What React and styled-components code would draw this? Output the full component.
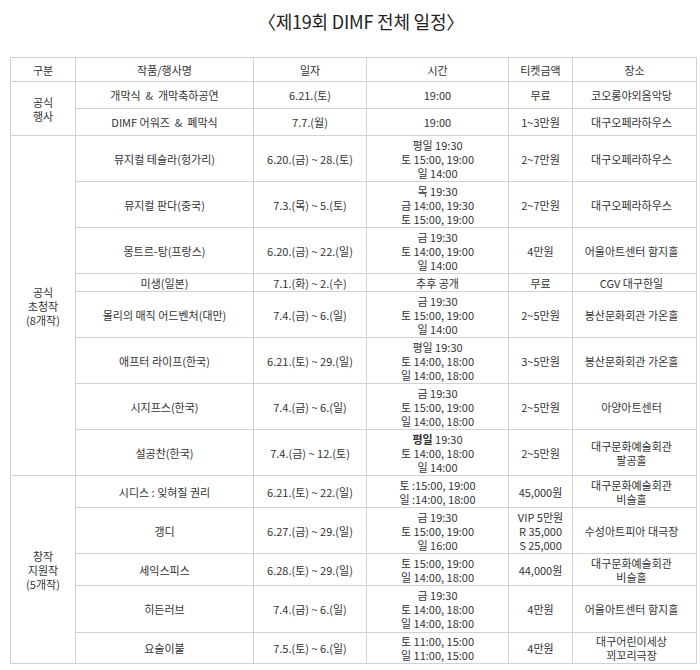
import styled, { createGlobalStyle } from 'styled-components';

const GlobalStyle = createGlobalStyle`
  body {
    margin: 0;
    background: #ffffff;
    font-family: "Noto Sans CJK KR", "Noto Sans", sans-serif;
    color: #333333;
  }
`;

// rows of the schedule, grouped by 구분
const groups = [
  {
    label: ['공식', '행사'],
    rows: [
      { h: 27, name: '개막식  &  개막축하공연', date: '6.21.(토)', time: ['19:00'], price: ['무료'], place: ['코오롱야외음악당'] },
      { h: 27, name: 'DIMF 어워즈  &  폐막식', date: '7.7.(월)', time: ['19:00'], price: ['1~3만원'], place: ['대구오페라하우스'] },
    ],
  },
  {
    label: ['공식', '초청작', '(8개작)'],
    rows: [
      { h: 46, name: '뮤지컬 테슬라(헝가리)', date: '6.20.(금) ~ 28.(토)', time: ['평일 19:30', '토 15:00, 19:00', '일 14:00'], price: ['2~7만원'], place: ['대구오페라하우스'] },
      { h: 46, name: '뮤지컬 판다(중국)', date: '7.3.(목) ~ 5.(토)', time: ['목 19:30', '금 14:00, 19:30', '토 15:00, 19:00'], price: ['2~7만원'], place: ['대구오페라하우스'] },
      { h: 46, name: '몽트르-탕(프랑스)', date: '6.20.(금) ~ 22.(일)', time: ['금 19:30', '토 14:00, 19:00', '일 14:00'], price: ['4만원'], place: ['어울아트센터 함지홀'] },
      { h: 18, name: '미생(일본)', date: '7.1.(화) ~ 2.(수)', time: ['추후 공개'], price: ['무료'], place: ['CGV 대구한일'] },
      { h: 46, name: '몰리의 매직 어드벤처(대만)', date: '7.4.(금) ~ 6.(일)', time: ['금 19:30', '토 15:00, 19:00', '일 14:00'], price: ['2~5만원'], place: ['봉산문화회관 가온홀'] },
      { h: 46, name: '애프터 라이프(한국)', date: '6.21.(토) ~ 29.(일)', time: ['평일 19:30', '토 14:00, 18:00', '일 14:00, 18:00'], price: ['3~5만원'], place: ['봉산문화회관 가온홀'] },
      { h: 46, name: '시지프스(한국)', date: '7.4.(금) ~ 6.(일)', time: ['금 19:30', '토 15:00, 19:00', '일 14:00, 18:00'], price: ['2~5만원'], place: ['아양아트센터'] },
      { h: 46, name: '설공찬(한국)', date: '7.4.(금) ~ 12.(토)', time: ['**평일** 19:30', '토 14:00, 18:00', '일 14:00'], price: ['2~5만원'], place: ['대구문화예술회관', '팔공홀'] },
    ],
  },
  {
    label: ['창작', '지원작', '(5개작)'],
    rows: [
      { h: 32, name: '시디스 : 잊혀질 권리', date: '6.21.(토) ~ 22.(일)', time: ['토 :15:00, 19:00', '일 :14:00, 18:00'], price: ['45,000원'], place: ['대구문화예술회관', '비슬홀'] },
      { h: 46, name: '갱디', date: '6.27.(금) ~ 29.(일)', time: ['금 19:30', '토 15:00, 19:00', '일 16:00'], price: ['VIP 5만원', 'R 35,000', 'S 25,000'], place: ['수성아트피아 대극장'] },
      { h: 32, name: '세익스피스', date: '6.28.(토) ~ 29.(일)', time: ['토 15:00, 19:00', '일 14:00, 18:00'], price: ['44,000원'], place: ['대구문화예술회관', '비슬홀'] },
      { h: 47, name: '히든러브', date: '7.4.(금) ~ 6.(일)', time: ['금 19:30', '토 14:00, 18:00', '일 14:00, 18:00'], price: ['4만원'], place: ['어울아트센터 함지홀'] },
      { h: 31, name: '요술이불', date: '7.5.(토) ~ 6.(일)', time: ['토 11:00, 15:00', '일 11:00, 15:00'], price: ['4만원'], place: ['대구어린이세상', '꾀꼬리극장'] },
    ],
  },
];

function Lines({ items }) {
  return items.map((line) => {
    if (line.startsWith('**')) {
      const [, bold, rest] = line.split('**');
      return <Line key={line}><b>{bold}</b>{rest}</Line>;
    }
    return <Line key={line}>{line}</Line>;
  });
}

function App() {
  return (
    <Page>
      <GlobalStyle />
      <Title>〈제19회 DIMF 전체 일정〉</Title>

      <Table>
        <colgroup>
          <Col $w={65} />
          <Col $w={178} />
          <Col $w={113} />
          <Col $w={142} />
          <Col $w={64} />
          <Col $w={124} />
        </colgroup>
        <thead>
          <Row $h={24}>
            <Head>구분</Head>
            <Head>작품/행사명</Head>
            <Head>일자</Head>
            <Head>시간</Head>
            <Head>티켓금액</Head>
            <Head>장소</Head>
          </Row>
        </thead>
        <tbody>
          {groups.map((g) => g.rows.map((r, i) => (
            <Row key={r.name} $h={r.h}>
              {i === 0 && (
                <Cell rowSpan={g.rows.length}><Lines items={g.label} /></Cell>
              )}
              <Cell>{r.name}</Cell>
              <Cell>{r.date}</Cell>
              <Cell><Lines items={r.time} /></Cell>
              <Cell><Lines items={r.price} /></Cell>
              <Cell $shift><Lines items={r.place} /></Cell>
            </Row>
          )))}
        </tbody>
      </Table>
    </Page>
  );
}

export default App;

const Page = styled.div`
  width: 700px;
  height: 670px;
  padding: 7px 0 0 10px;
  box-sizing: border-box;
`;

const Title = styled.h1`
  margin: 0 0 22px 0;
  padding-left: 8px;
  width: 686px;
  text-align: center;
  font-size: 18px;
  line-height: 28px;
  font-weight: 400;
  color: #222222;
  letter-spacing: -0.2px;
`;

const Table = styled.table`
  width: 686px;
  table-layout: fixed;
  border-collapse: collapse;
  border: 1px solid #c8c8c8;
  font-size: 11px;
  color: #333333;
`;

const Col = styled.col`
  width: ${(p) => p.$w}px;
`;

const Row = styled.tr`
  height: ${(p) => p.$h}px;
`;

const Head = styled.th`
  border: 1px solid #d2d2d2;
  padding: 0;
  font-weight: 400;
  text-align: center;
  vertical-align: middle;
  line-height: 14px;
`;

const Cell = styled.td`
  border: 1px solid #d2d2d2;
  padding: 0 ${(p) => (p.$shift ? '6px' : '0')} 0 0;
  text-align: center;
  vertical-align: middle;
  line-height: 14px;
  white-space: pre;
  overflow: hidden;

  b {
    font-weight: 700;
  }
`;

const Line = styled.div`
  line-height: 14px;
`;
